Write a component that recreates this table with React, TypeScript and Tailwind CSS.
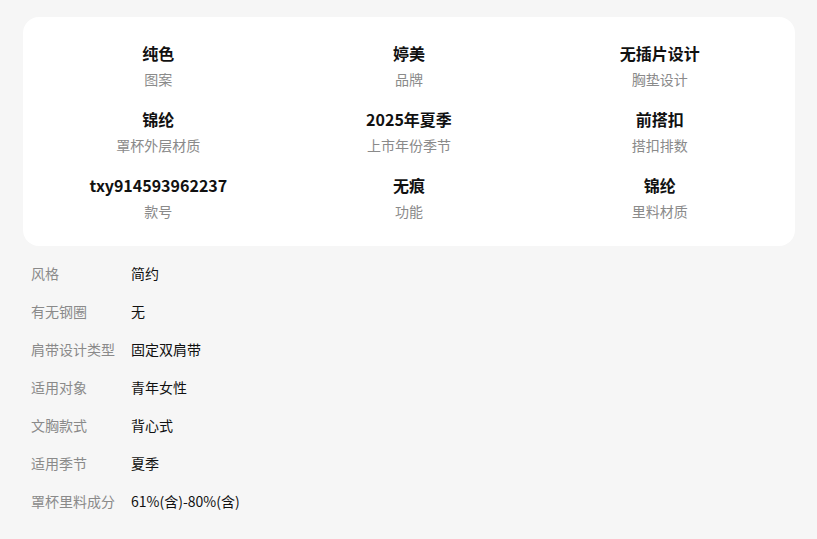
import React from 'react';

const specs = [
  { value: '纯色', label: '图案' },
  { value: '婷美', label: '品牌' },
  { value: '无插片设计', label: '胸垫设计' },
  { value: '锦纶', label: '罩杯外层材质' },
  { value: '2025年夏季', label: '上市年份季节' },
  { value: '前搭扣', label: '搭扣排数' },
  { value: 'txy914593962237', label: '款号' },
  { value: '无痕', label: '功能' },
  { value: '锦纶', label: '里料材质' },
];

const params = [
  ['风格', '简约'],
  ['有无钢圈', '无'],
  ['肩带设计类型', '固定双肩带'],
  ['适用对象', '青年女性'],
  ['文胸款式', '背心式'],
  ['适用季节', '夏季'],
  ['罩杯里料成分', '61%(含)-80%(含)'],
];

export default function App() {
  return (
    <div
      className="min-h-screen w-full bg-[#f6f6f6] pl-[23px] pr-[22px] pt-[17px] pb-4"
      style={{ fontFamily: '"Noto Sans CJK SC", "Noto Sans", sans-serif' }}
    >
      {/* key specs card */}
      <div className="rounded-[16px] bg-white px-[10px] pt-[25px] pb-[25px]">
        <div className="grid grid-cols-3 gap-y-[19px]">
          {specs.map((s, i) => (
            <div key={i} className="flex flex-col items-center">
              <div className="text-[16px] leading-[22px] font-bold text-[#111]">{s.value}</div>
              <div className="mt-[5px] text-[14px] leading-[20px] text-[#8a8a8a]">{s.label}</div>
            </div>
          ))}
        </div>
      </div>

      {/* parameter list */}
      <div className="mt-[8px] px-[8px]">
        {params.map(([k, v]) => (
          <div key={k} className="flex py-[9px] text-[14px] leading-[20px]">
            <div className="w-[100px] shrink-0 text-[#8a8a8a]">{k}</div>
            <div className="text-[#111]">{v}</div>
          </div>
        ))}
      </div>
    </div>
  );
}
